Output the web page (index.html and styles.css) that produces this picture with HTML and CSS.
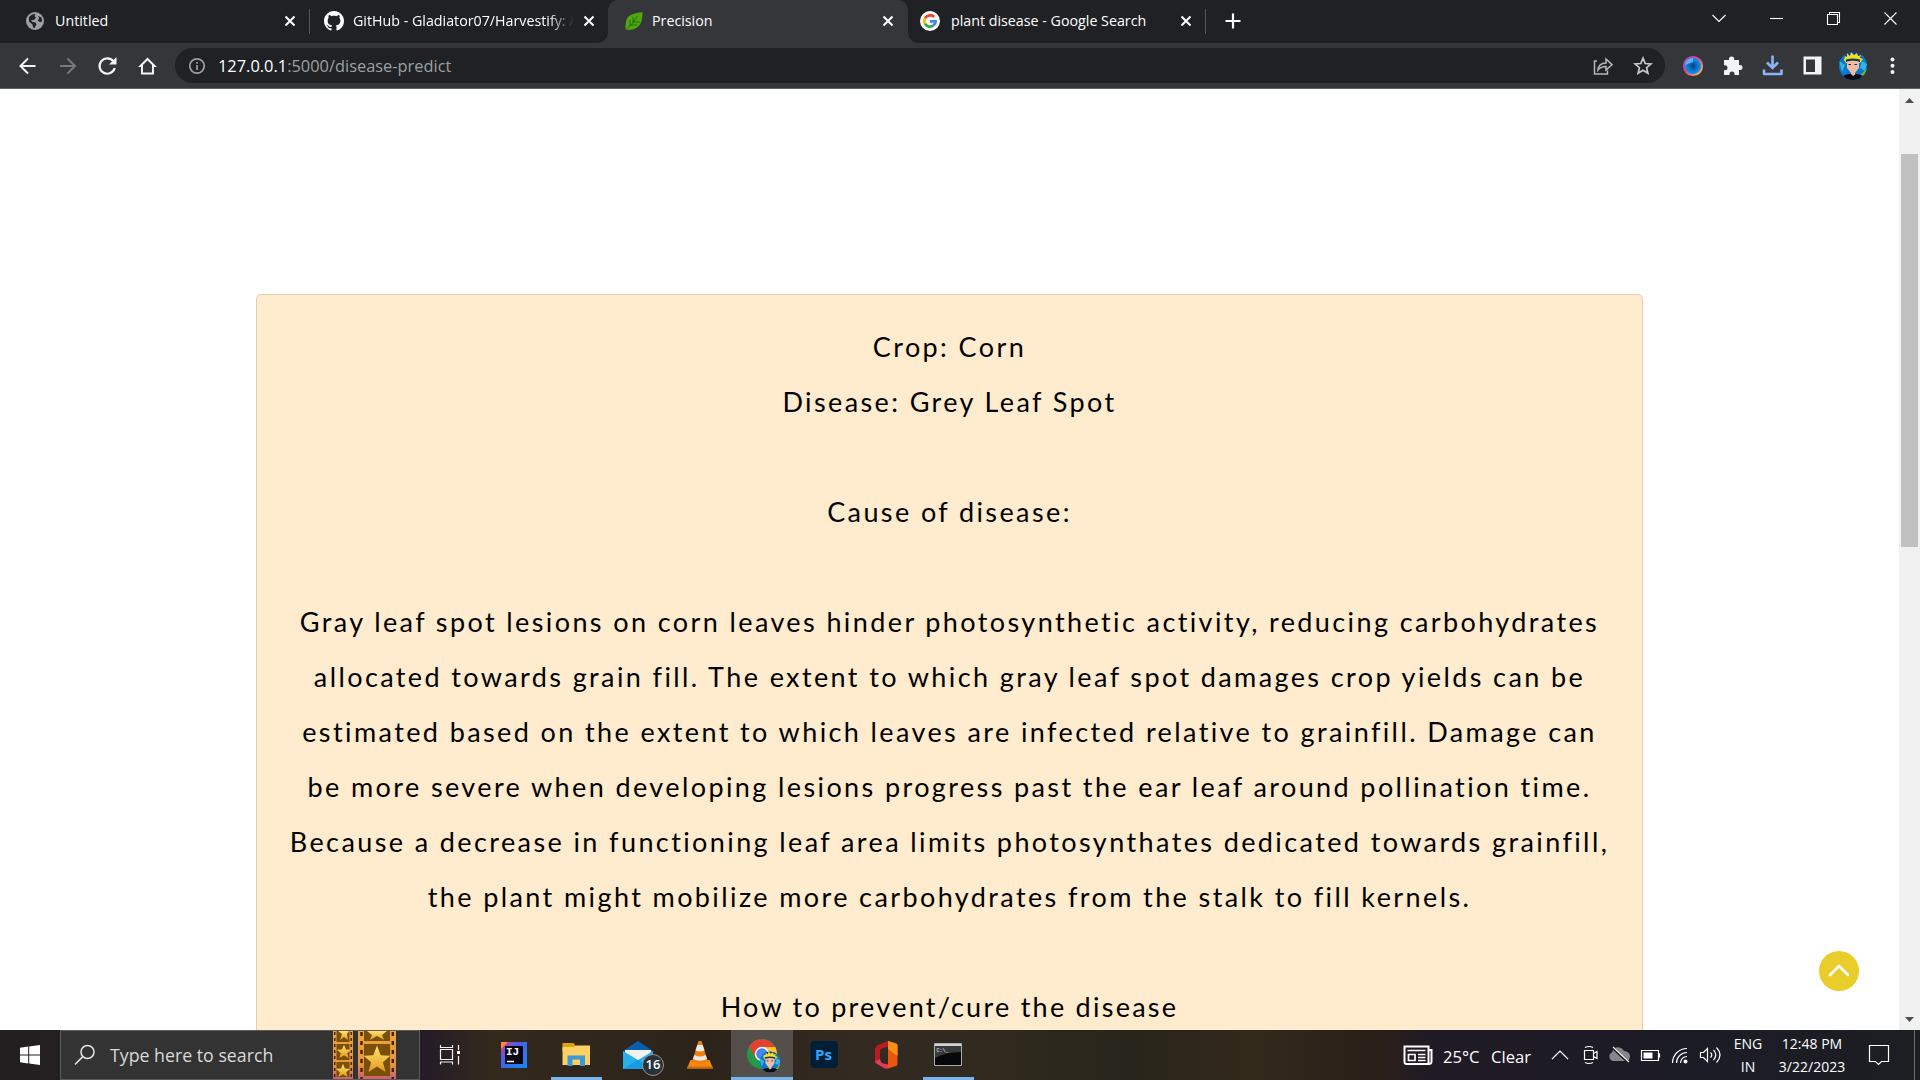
FILE: index.html
```
<!DOCTYPE html>
<html lang="en">
<head>
<meta charset="utf-8">
<title>Precision</title>
<link rel="stylesheet" href="styles.css">
</head>
<body>
<header class="tabstrip">
  <div class="tab tab-first">
    <svg class="fav" viewBox="0 0 18 18"><circle cx="9" cy="9" r="9" fill="#9aa0a6"/><path d="M3 5q3-3.500 6.500-3l-1 2 1.500 1.500-2 2.500H5l1.500 2 3 .5 1 2-2 3.500-1.500-.5-.5-3L3 9.500zM12 4l3.500 1.500.7 4-2.500.6-2-1.600 1.500-2z" fill="#202124"/></svg>
    <span class="tab-title">Untitled</span>
    <svg class="close" viewBox="0 0 12 12"><path d="M1.500 1.500l9 9m0-9l-9 9"/></svg>
  </div>
  <i class="divider"></i>
  <div class="tab tab-second">
    <svg class="fav" viewBox="0 0 16 16"><path fill="#fff" d="M8 0C3.580 0 0 3.580 0 8c0 3.540 2.290 6.530 5.470 7.590.4.070.55-.17.55-.38 0-.19-.01-.82-.01-1.490-2.010.37-2.530-.49-2.690-.94-.09-.23-.48-.94-.82-1.130-.28-.15-.68-.52-.01-.53.63-.01 1.080.58 1.230.82.72 1.210 1.870.87 2.330.66.070-.52.28-.87.51-1.070-1.780-.2-3.640-.89-3.640-3.950 0-.87.31-1.590.82-2.150-.08-.2-.36-1.020.08-2.120 0 0 .67-.21 2.200.82.64-.18 1.320-.27 2-.27s1.360.09 2 .27c1.530-1.040 2.200-.82 2.200-.82.44 1.100.16 1.920.08 2.120.51.56.82 1.270.82 2.150 0 3.070-1.870 3.750-3.650 3.950.29.25.54.73.54 1.480 0 1.070-.01 1.930-.01 2.200 0 .21.15.46.55.38A8 8 0 0 0 16 8c0-4.420-3.580-8-8-8z"/></svg>
    <span class="tab-title fade">GitHub - Gladiator07/Harvestify: A</span>
    <svg class="close" viewBox="0 0 12 12"><path d="M1.500 1.500l9 9m0-9l-9 9"/></svg>
  </div>
  <div class="tab tab-active">
    <svg class="fav" viewBox="0 0 18 18"><path d="M17.500 0C12 1 4 2 2 6.500.5 10 .6 14 .5 17.500c5 .5 11 .3 14-4.500C17.500 9 17.500 4 17.500 0z" fill="#4fa812"/><path d="M1 17.500Q8 12 12.500 4M5 14V8M8 11V5M6 13h6M9 10h6" stroke="#2c6d08" stroke-width="1" fill="none"/></svg>
    <span class="tab-title">Precision</span>
    <svg class="close" viewBox="0 0 12 12"><path d="M1.500 1.500l9 9m0-9l-9 9"/></svg>
  </div>
  <div class="tab tab-last">
    <svg class="fav" viewBox="0 0 20 20"><circle cx="10" cy="10" r="10" fill="#fff"/><g fill="none" stroke-width="2.800"><path d="M14.100 6A5.700 5.700 0 0 0 5 7.200" stroke="#ea4335"/><path d="M5 7.200a5.700 5.700 0 0 0 0 5.600" stroke="#fbbc05"/><path d="M5 12.800a5.700 5.700 0 0 0 8.700 1.500" stroke="#34a853"/><path d="M13.700 14.300a5.500 5.500 0 0 0 1.900-3.900H10" stroke="#4285f4"/></g></svg>
    <span class="tab-title">plant disease - Google Search</span>
    <svg class="close" viewBox="0 0 12 12"><path d="M1.500 1.500l9 9m0-9l-9 9"/></svg>
  </div>
  <i class="divider"></i>
  <svg class="new-tab" viewBox="0 0 16 16"><path d="M8 .5v15M.5 8h15" stroke="#fff" stroke-width="2.200"/></svg>
  <div class="window-controls">
    <svg viewBox="0 0 58 36"><path d="M22.500 15l6.500 6.500 6.500-6.500"/></svg>
    <svg viewBox="0 0 57 36"><path d="M22 18.500h13"/></svg>
    <svg viewBox="0 0 57 36"><path d="M22.500 14.500h10v10h-10zM24.500 14.500v-2h10v10h-2"/></svg>
    <svg viewBox="0 0 57 36"><path d="M22.500 12.500l12 12m0-12l-12 12"/></svg>
  </div>
</header>

<nav class="toolbar">
  <div class="nav-buttons">
    <svg viewBox="0 0 40 40"><path d="M35.500 20H20.500m7.500-7.500L20.500 20l7.500 7.500" stroke="#f1f3f4" stroke-width="2"/></svg>
    <svg viewBox="0 0 40 40"><path d="M20 20h15m-7.500-7.500L35 20l-7.500 7.500" stroke="#77797d" stroke-width="2"/></svg>
    <svg viewBox="0 0 40 40"><path d="M33.500 15.500a7.700 7.700 0 1 0 1.200 6.500" stroke="#f1f3f4" stroke-width="2.200"/><path d="M36.500 11v7.500H29z" fill="#f1f3f4"/></svg>
    <svg viewBox="0 0 40 40"><path d="M22 27.500V20h-1.500l7-7 7 7H33v7.500z" stroke="#f1f3f4" stroke-width="2"/></svg>
  </div>
  <div class="omnibox">
    <svg class="info" viewBox="0 0 18 18"><circle cx="9" cy="9" r="7.200" fill="none" stroke="#9aa0a6" stroke-width="1.700"/><path d="M9 8v5M9 5v1.700" stroke="#9aa0a6" stroke-width="1.700"/></svg>
    <span class="url"><b>127.0.0.1</b>:5000/disease-predict</span>
    <svg class="omni-icon share" viewBox="0 0 20 20"><g fill="none" stroke="#b5b7ba" stroke-width="1.500"><path d="M4 5H1.500v13h13v-3.500"/><path d="M5 14c.5-5 3.500-7 8-7V3l6 5.700-6 5.300v-3.500c-4 0-6 1-8 3.500z"/></g></svg>
    <svg class="omni-icon" viewBox="0 0 20 20"><path d="M10 2.200l2.200 5.300 5.700.5-4.300 3.700 1.300 5.600-4.900-3-4.900 3 1.300-5.600L2.100 8l5.700-.5z" fill="none" stroke="#c8cacd" stroke-width="1.700"/></svg>
  </div>
  <div class="extensions">
    <svg viewBox="0 0 40 40"><defs><radialGradient id="eye"><stop offset="0" stop-color="#083d72"/><stop offset=".5" stop-color="#0874cf"/><stop offset="1" stop-color="#1fa0f5"/></radialGradient><linearGradient id="ring" x2="1" y2="1"><stop offset="0" stop-color="#9350dc"/><stop offset=".45" stop-color="#f13d83"/><stop offset="1" stop-color="#ffd05d"/></linearGradient></defs><circle cx="20" cy="20" r="9.200" fill="url(#eye)" stroke="url(#ring)" stroke-width="1.800"/><path d="M12 19a8 8 0 0 1 8-7v4z" fill="#8bcdf8" opacity=".65"/></svg>
    <svg viewBox="0 0 40 40"><path fill="#f1f3f4" d="M11 14h5v-1a2.600 2.600 0 0 1 5.200 0v1H26v5h1a2.500 2.500 0 0 1 0 5h-1v5h-4.500v-1a2.500 2.500 0 0 0-5 0v1H11v-4.800h1a2.500 2.500 0 0 0 0-5h-1z"/></svg>
    <svg viewBox="0 0 40 40"><g fill="none" stroke="#8ab4f8"><path d="M19.500 9.500V22m-5.500-5.500l5.500 5.500 5.500-5.500" stroke-width="2.600"/><path d="M11 23.500V28h17.500v-4.500" stroke-width="2.600" stroke-linejoin="round"/></g></svg>
    <svg viewBox="0 0 40 40"><path fill="#f1f3f4" fill-rule="evenodd" d="M10.500 10.500h18v18h-18zM13 13.500V26h9V13.500z"/></svg>
    <svg viewBox="0 0 40 40"><defs><clipPath id="av"><circle cx="20" cy="20" r="14"/></clipPath><symbol id="face" viewBox="0 0 40 40"><g clip-path="url(#av)"><path fill="#0878ca" d="M0 0h40v40H0z"/><path d="M6 15l6 4-3 7zM29 15l5 3-2 7-5-3z" fill="#35b2e8"/><path d="M25 31l9-8v9z" fill="#8bb02d"/><path d="M12 6h16v8H12z" fill="#1436a8"/><path d="M11 14l1-4 2 1 0-4 3 3 1-4 3 3 3-2 1 3 3-1-1 3 3 1-3 4H13z" fill="#efe21c"/><path d="M13 13.500q7-2 14 0v2.500H13z" fill="#1b3857"/><path d="M14 15.500q6-1.500 12 0V22l-4 5v4h-4v-4l-4-5z" fill="#f0bda2"/><path d="M15.500 18.500h2.500m3.500 0h2.500" stroke="#252231"/><path d="M7 34q4-7 11-6l2 2 3-2q8 0 10 6z" fill="#080b14"/></g></symbol></defs><use href="#face"/></svg>
    <svg viewBox="0 0 40 40"><g fill="#f1f3f4"><circle cx="19.500" cy="13.500" r="2"/><circle cx="19.500" cy="19.700" r="2"/><circle cx="19.500" cy="26" r="2"/></g></svg>
  </div>
</nav>

<main class="viewport">
  <section class="page">
    <article class="card">
      Crop: Corn<br>Disease: Grey Leaf Spot<br><br>Cause of disease:<br><br>
      Gray leaf spot lesions on corn leaves hinder photosynthetic activity, reducing carbohydrates<br>
      allocated towards grain fill. The extent to which gray leaf spot damages crop yields can be<br>
      estimated based on the extent to which leaves are infected relative to grainfill. Damage can<br>
      be more severe when developing lesions progress past the ear leaf around pollination time.<br>
      Because a decrease in functioning leaf area limits photosynthates dedicated towards grainfill,<br>
      the plant might mobilize more carbohydrates from the stalk to fill kernels.<br><br>
      <span class="question">How to prevent/cure the disease</span>
    </article>
    <svg class="to-top" viewBox="0 0 40 40"><circle cx="20" cy="20" r="20" fill="#e9cd2a"/><path d="M11 24l9-9 9 9" fill="none" stroke="#fff" stroke-width="2.600" stroke-linecap="round"/></svg>
  </section>
  <aside class="scrollbar">
    <svg viewBox="0 0 21 21"><path d="M6 14l4.500-5 4.500 5z" fill="#505050"/></svg>
    <div class="track"><div class="thumb"></div></div>
    <svg viewBox="0 0 21 21"><path d="M6 8l4.500 5L15 8z" fill="#505050"/></svg>
  </aside>
</main>

<footer class="taskbar">
  <div class="start"><svg viewBox="0 0 20 20"><path fill="#fff" d="M0 2.800l8.200-1.200v7.900H0zM9.200 1.500L20 0v9.500H9.200zM0 10.500h8.200v7.900L0 17.200zM9.200 10.500H20V20L9.200 18.500z"/></svg></div>
  <div class="search">
    <svg class="lens" viewBox="0 0 22 22"><g fill="none" stroke="#e4e4e4" stroke-width="1.500"><circle cx="13.500" cy="8" r="6.500"/><path d="M8.800 12.600L1 20.500"/></g></svg>
    <span>Type here to search</span>
    <svg class="film" viewBox="0 0 64 48">
      <defs><linearGradient id="gold" x2="0" y2="1"><stop offset="0" stop-color="#f0a437"/><stop offset=".7" stop-color="#e8923a"/><stop offset="1" stop-color="#c95f73"/></linearGradient><linearGradient id="star" x2="0" y2="1"><stop offset="0" stop-color="#ffe56b"/><stop offset="1" stop-color="#e39a22"/></linearGradient><path id="st" d="M0-12l3.300 8 8.700.4-6.700 5.500L7.600 10 0 5.500-7.600 10l2.300-8.100L-12-3.600l8.700-.4z" fill="url(#star)"/></defs>
      <path d="M0 0h20v48H0zM25 0h38v48H25z" fill="url(#gold)"/>
      <path d="M3.500 0h13v11h-13zM3.500 13h13v16h-13zM3.500 31h13v15h-13zM31 0h26v10H31zM31 13h26v32H31z" fill="#7a5009"/>
      <path d="M1.700 1v47M18.300 1v47" stroke="#3b2712" stroke-width="1.500" stroke-dasharray="3 3"/><path d="M28.500 1v47M59.800 1v47" stroke="#342417" stroke-width="2.400" stroke-dasharray="4 5"/>
      <use href="#st" transform="translate(44 29) scale(1.120 1.200)"/><use href="#st" transform="translate(10 40) scale(.6)"/><use href="#st" transform="translate(11 21) scale(.6)"/><path d="M5 0l4 3-2 6 4-3 4 3-1-6 2-3zM34 0l5 4-2 5 7-4 7 4-2-5 5-4z" fill="url(#star)"/>
    </svg>
  </div>
  <div class="apps">
    <div class="app task-view"><svg viewBox="0 0 30 30"><g fill="none" stroke="#f3f3f3" stroke-width="1.200"><path d="M5.500 9.500h12v10h-12zM5.500 5v2.500h12V5M5.500 24.500V22h12v2.500M23.500 5v5M23.500 16v8.500"/></g><path d="M22 11h3v3h-3z" fill="#fff"/></svg></div>
    <div class="app"><svg viewBox="0 0 30 30"><defs><linearGradient id="ij" x2="1" y2="1"><stop offset="0" stop-color="#f43579"/><stop offset=".35" stop-color="#4b5de8"/><stop offset="1" stop-color="#128bf5"/></linearGradient></defs><path d="M2 2h26v26H2z" fill="url(#ij)"/><path d="M2 2h7L2 9z" fill="#fb8a38"/><path d="M6 6h18v18H6z" fill="#080511"/><path d="M8 21.500h7" stroke="#fff" stroke-width="1.500"/><text class="mono-mark" x="7" y="14.800">IJ</text></svg></div>
    <div class="app open"><svg viewBox="0 0 30 30"><path d="M1.500 3h11l2 3v6h-13z" fill="#dda20d"/><path d="M1.500 7h11l2-1.500H29V25H1.500z" fill="#fcd063"/><path d="M6.500 26V15.500h17.500V26h-5v-6.500h-7.500V26z" fill="#3d98d8"/></svg></div>
    <div class="app mail"><svg viewBox="0 0 30 30"><path d="M0 11L15 1l15 10v4H0z" fill="#075fae"/><path d="M2 10h26v10H2z" fill="#f2f2f0"/><path d="M0 11l15 9 15-9v18H0z" fill="#28b0ec"/><path d="M0 29l15-9 15 9z" fill="#179be2"/></svg><span class="badge">16</span></div>
    <div class="app"><svg viewBox="0 0 30 30"><path d="M5.500 20h19l3.500 8.500H2z" fill="#f48a12"/><path d="M2.500 26.500h25l.5 2H2z" fill="#d06808"/><path d="M13.500 1h3L23 22q-8 4.500-16 0z" fill="#ee8112"/><path d="M12.300 5h5.400l1.800 5.500q-4.500 2-9 0zM9.200 15q5.800 3 11.600 0l1.200 4q-7 3.500-14 0z" fill="#ece9e5"/></svg></div>
    <div class="app open current"><svg class="chrome" viewBox="0 0 34 34"><circle cx="16" cy="15" r="15" fill="#229a47"/><path d="M16 8h13.300A15 15 0 0 1 16.500 30L22 18z" fill="#fbc62e"/><path d="M3 7.500L9.500 19 16 8h13A15 15 0 0 0 3 7.500z" fill="#e34133"/><circle cx="16" cy="15" r="7.200" fill="#fff"/><circle cx="16" cy="15" r="5.800" fill="#4285f4"/><svg x="9" y="8" width="28" height="28" viewBox="0 0 40 40"><use href="#face" width="40" height="40"/></svg></svg></div>
    <div class="app"><svg viewBox="0 0 30 30"><rect x="1.500" y="1" width="27.500" height="27" rx="4" fill="#001e36"/><text class="ps-mark" x="6" y="19.500">Ps</text></svg></div>
    <div class="app"><svg viewBox="0 0 30 30"><path d="M17 1L7 5q-3 1.500-3 5v11l5-2v-8q0-2 2-2.500l6-2z" fill="#bd1925"/><path d="M17 1l8 2.500q1.500.5 1.500 2V24q0 1.500-1.500 2l-8 2.500z" fill="#e9570c"/><path d="M17 1l8 2.500q1.500.5 1.500 2V16L17 9z" fill="#fa8f14"/><path d="M4 21l5-2q1 4 3 4.500l5 1v4q-2 .5-4-.5l-7-4q-2-1-2-3z" fill="#e83a58"/></svg></div>
    <div class="app open"><svg viewBox="0 0 30 30"><path d="M1.500 3.500h27v22h-27z" fill="#080808" stroke="#a7acb0"/><path d="M2 4h26v2H2z" fill="#d1d5d8"/><path d="M2 6h26v6Q12 12 2 18z" fill="#38393a"/><text class="cmd-mark" x="3.500" y="12">C:\_</text></svg></div>
  </div>
  <div class="tray">
    <svg class="news" viewBox="0 0 30 20"><path d="M1.500 1.500h24V19h-22q-2 0-2-2zM25.500 5h3v11.500q0 2.500-3 2.500" fill="none" stroke="#fff" stroke-width="2"/><path d="M4.500 5.500h18M15 9.500h7.500M15 12.500h7.500M15 15.500h7.500" stroke="#fff" stroke-width="1.500"/><path d="M5.500 9.500h6.500v6H5.500z" fill="none" stroke="#fff" stroke-width="1.700"/></svg>
    <span class="weather">25°C</span><span class="weather sky">Clear</span>
    <div class="status">
      <svg viewBox="0 0 30 30"><path d="M7 19l8-8 8 8" class="line"/></svg>
      <svg viewBox="0 0 30 30"><path d="M9.500 10.500h9v9h-9zM18.500 13.500l3.500-2v7l-3.500-2M10 7.500q4-2 8 0M10 22.500q4 2 8 0" class="line"/></svg>
      <svg viewBox="0 0 30 30"><path d="M8 21a4.500 4.500 0 0 1-1-8.500q2-6 7.500-5 3 .5 4.500 3.500 6 .5 6 5.500 0 4-4 4.500z" fill="#85858b"/><path d="M7 7l17 16" stroke="#1d1c24" stroke-width="3"/><path d="M8 7l16 15" stroke="#fff" stroke-width="1.200"/></svg>
      <svg viewBox="0 0 30 30"><path d="M6.500 10.500h17v10h-17zM24.500 13.500v4" class="line"/><path d="M8.500 12.500h9v6h-9z" fill="#fff"/></svg>
      <svg viewBox="0 0 30 30"><path d="M7.500 23A14.500 14.500 0 0 1 22 8.500M11.500 23A10.500 10.500 0 0 1 22 12.500M15.500 23a6.500 6.500 0 0 1 6.500-6.500" class="line"/><circle cx="20.500" cy="21.500" r="2" fill="#fff"/></svg>
      <svg viewBox="0 0 30 30"><path d="M5.500 12.500h3l4-4v13l-4-4h-3zM15.500 12.500q2.500 2.500 0 5M18.500 10q4.500 5 0 10M21.500 7.500q7 7.500 0 15" class="line"/></svg>
    </div>
    <div class="stack lang"><span>ENG</span><span>IN</span></div>
    <div class="stack clock"><span>12:48 PM</span><span>3/22/2023</span></div>
    <svg class="notice" viewBox="0 0 22 22"><path d="M1.500 1.500h19v16h-7l-3 3-3-3h-6z" fill="none" stroke="#fff" stroke-width="1.200"/></svg>
    <i class="peek"></i>
  </div>
</footer>
</body>
</html>
```
FILE: styles.css
```
* { box-sizing: border-box; }
body {
  margin: 0;
  width: 1920px;
  height: 1080px;
  overflow: hidden;
  display: flex;
  flex-direction: column;
  font-family: "Open Sans", "Noto Sans", sans-serif;
  background: #fff;
}
svg { display: block; flex: none; }

/* Tab strip */
.tabstrip { height: 43px; display: flex; background: #202124; color: #fff; }
.tab { display: flex; height: 43px; align-items: center; font-size: 14.250px; white-space: nowrap; }
.tab-first { width: 309px; padding: 0 13px 1px 26px; }
.tab-second { width: 298px; padding: 0 13px 1px 14px; }
.tab-active { width: 300px; padding: 0 14px 1px 17px; background: #35363a; border-radius: 10px 10px 0 0; position: relative; }
.tab-active::before, .tab-active::after {
  content: "";
  position: absolute;
  bottom: 0;
  width: 10px;
  height: 10px;
}
.tab-active::before { left: -10px; background: radial-gradient(circle at 0 0, transparent 9.500px, #35363a 10px); }
.tab-active::after { right: -10px; background: radial-gradient(circle at 100% 0, transparent 9.500px, #35363a 10px); }
.tab-last { width: 297px; padding: 0 13px 1px 12px; }
.fav { width: 18px; height: 18px; margin-right: 10px; }
.tab-first .fav { margin-right: 11px; }
.tab-second .fav { width: 20px; height: 20px; margin-right: 9px; }
.tab-active .fav { margin-right: 9px; }
.tab-last .fav { width: 20px; height: 20px; margin-right: 11px; }
.tab-title { flex: 1; min-width: 0; overflow: hidden; line-height: 22px; }
.fade { flex: 0 0 229px; margin-right: auto; -webkit-mask-image: linear-gradient(90deg, #000 195px, transparent 221px); mask-image: linear-gradient(90deg, #000 195px, transparent 221px); }
.close { width: 12px; height: 12px; fill: none; stroke: #fff; stroke-width: 2; }
.divider { width: 1px; height: 25px; margin-top: 9px; background: #55575b; }
.new-tab { width: 16px; height: 16px; margin: 13px 0 0 19px; }
.window-controls { display: flex; margin: 0 1px 0 auto; }
.window-controls svg { width: 57px; height: 36px; fill: none; stroke: #fff; stroke-width: 1.100; }
.window-controls svg:first-child { width: 58px; }

/* Toolbar */
.toolbar { height: 46px; display: flex; align-items: center; background: #35363a; border-bottom: 1px solid #606165; }
.nav-buttons { display: flex; width: 175px; }
.nav-buttons svg { width: 40px; height: 40px; fill: none; }
.omnibox { width: 1490px; height: 35px; border-radius: 18px; background: #202124; display: flex; align-items: center; padding: 0 12px 0 13px; }
.info { width: 18px; height: 18px; margin-right: 12px; }
.url { flex: 1; font-size: 16.400px; line-height: 24px; color: #9aa0a6; }
.url b { color: #fff; font-weight: 400; }
.omni-icon { width: 20px; height: 20px; }
.share { margin-right: 20px; }
.extensions { display: flex; padding-left: 8px; }
.extensions svg { width: 40px; height: 40px; }

/* Page */
.viewport { height: 941px; display: flex; overflow: hidden; }
.page { flex: 1; position: relative; overflow: hidden; padding: 205px 256px 0; }
.card {
  height: 900px;
  padding-top: 24px;
  border: 1px solid #e3cfae;
  border-radius: 5px;
  background: #ffebcd;
  color: #000;
  text-align: center;
  white-space: nowrap;
  font: 27px/55px Lato, sans-serif;
  letter-spacing: 2.395px;
}
.question { letter-spacing: 2.260px; }
.to-top { position: absolute; right: 40px; bottom: 39px; width: 40px; height: 40px; }
.scrollbar { width: 21px; display: flex; flex-direction: column; background: #f1f1f1; }
.scrollbar svg { width: 21px; height: 21px; }
.track { flex: 1; padding: 44px 2px 0; }
.thumb { height: 393px; background: #c1c1c1; }

/* Taskbar */
.taskbar {
  height: 50px;
  display: flex;
  color: #fff;
  background: linear-gradient(90deg, #231f20 0, #251d26 430px, #33291d 490px, #2c231b 700px, #332a21 860px, #302a1e 1000px, #28251c 1130px, #33291b 1250px, #2a1e19 1385px, #1f1b25 1430px, #1c1c26 1700px, #1c1e22 1920px);
}
.start { width: 60px; display: flex; align-items: center; justify-content: center; }
.start svg { width: 20px; height: 20px; }
.search { width: 360px; display: flex; align-items: center; background: #333; border: 1px solid #5b5b5b; overflow: hidden; }
.lens { width: 22px; height: 22px; margin: 0 14px 0 13px; }
.search span { width: 223px; font-size: 17.750px; color: #d9d9d9; line-height: 26px; }
.film { width: 64px; height: 48px; }
.apps { display: flex; }
.app { width: 62px; display: flex; align-items: center; justify-content: center; position: relative; }
.app svg { width: 30px; height: 30px; }
.app.task-view { width: 63px; padding-right: 3px; }
.app.open::after { content: ""; position: absolute; left: 6px; right: 5px; bottom: 0; height: 3px; background: #76b5ee; }
.app.current { background: #554f4c; }
.app.current::after { left: 0; right: 0; }
.app .chrome { width: 34px; height: 34px; margin: 2px 0 0 1px; }
.badge { position: absolute; left: 35px; top: 24px; width: 22px; height: 22px; border: 1px solid #939393; border-radius: 50%; background: #27323a; font-size: 13px; font-weight: 600; line-height: 19px; text-align: center; }
.mono-mark { font: bold 11px "Liberation Mono", monospace; fill: #fff; }
.ps-mark { font: bold 15px "Open Sans", sans-serif; fill: #31a8ff; }
.cmd-mark { font: 5px "Liberation Mono", monospace; fill: #fff; }
.tray { display: flex; align-items: center; margin-left: auto; }
.news { width: 30px; height: 20px; margin-right: 10px; }
.weather { width: 48px; font-size: 16.600px; line-height: 26px; padding-top: 3px; }
.sky { width: 54px; }
.status { display: flex; }
.status svg { width: 30px; height: 30px; }
.line { fill: none; stroke: #fff; stroke-width: 1.200; }
.stack { display: flex; flex-direction: column; align-items: center; font-size: 14px; line-height: 23px; }
.lang { width: 46px; }
.clock { width: 82px; }
.notice { width: 22px; height: 22px; margin: 0 24px 0 15px; }
.peek { width: 1px; height: 50px; margin-right: 5px; background: #6a6b6e; }
```
